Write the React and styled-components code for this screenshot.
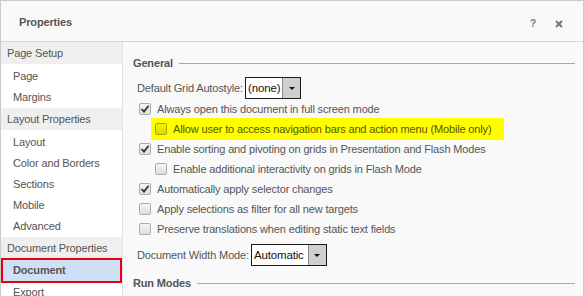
import styled, { createGlobalStyle } from "styled-components";

const GlobalStyle = createGlobalStyle`
	html, body {
		margin: 0;
		padding: 0;
		overflow: hidden;
		background: #ffffff;
	}
	body {
		font-family: "Liberation Sans", Arial, sans-serif;
		font-size: 11px;
		letter-spacing: -0.15px;
		color: #555555;
	}
`;

const Window = styled.div`
	width: 584px;
	height: 340px;
	box-sizing: border-box;
	border: 1px solid #cacaca;
	background: #f9f9f9;
	display: flex;
	flex-direction: column;
`;

const TitleBar = styled.div`
	height: 40px;
	flex: 0 0 40px;
	display: flex;
	align-items: center;
	padding: 0 16px 0 18px;
	border-bottom: 1px solid #d6d6d6;
	background: #f9f9f9;
`;

const Title = styled.div`
	flex: 1;
	font-weight: bold;
	font-size: 11px;
	color: #555;
	margin-top: 1px;
`;

const TitleButton = styled.span`
	width: 16px;
	display: flex;
	justify-content: center;
	margin-left: 10px;
	margin-top: 5px;
	font-weight: bold;
	font-size: 10px;
	color: #777;
`;

const Body = styled.div`
	flex: 1;
	display: flex;
	min-height: 0;
`;

const Sidebar = styled.div`
	width: 121px;
	flex: 0 0 121px;
	background: #ffffff;
	border-right: 1px solid #e2e2e2;
`;

const GroupHeader = styled.div`
	height: 22px;
	line-height: 22px;
	padding-left: 6px;
	background: #efefef;
	white-space: nowrap;
`;

const GroupList = styled.div`
	padding-top: ${(p) => p.$pad}px;
`;

const NavItem = styled.div`
	height: 21px;
	line-height: 21px;
	padding-left: 12px;
	white-space: nowrap;
	box-sizing: border-box;
	${(p) =>
		p.$selected &&
		`
		height: 23px;
		line-height: 23px;
		margin: -2px 1px 0;
		padding-left: 11px;
		background: #cfe0f6;
		font-weight: bold;
		outline: 2px solid #e8000b;
		outline-offset: -1px;
	`}
`;

const Content = styled.div`
	flex: 1;
	padding: 11px 8px 0 10px;
	background: #f9f9f9;
`;

const Legend = styled.div`
	height: 20px;
	display: flex;
	align-items: center;
	gap: 6px;
	font-weight: bold;
	margin-top: ${(p) => p.$top || 0}px;

	&::after {
		content: "";
		flex: 1;
		height: 1px;
		background: #a8a8a8;
		margin-top: 1px;
	}
`;

const FieldRow = styled.div`
	display: flex;
	align-items: center;
	gap: 2px;
	padding-left: 4px;
	margin-top: ${(p) => p.$top}px;
`;

const Select = styled.div`
	width: ${(p) => p.$width}px;
	height: 22px;
	box-sizing: border-box;
	border: 1px solid #1a1a1a;
	background: #fff;
	display: flex;
	color: #111;
	font-size: 11.5px;
`;

const SelectValue = styled.span`
	flex: 1;
	display: flex;
	align-items: center;
	padding-left: 2px;
`;

const SelectButton = styled.span`
	width: 17px;
	border-left: 1px solid #8a8a8a;
	background: #cfcfcf;
	display: flex;
	align-items: center;
	justify-content: center;

	&::before {
		content: "";
		border-left: 3px solid transparent;
		border-right: 3px solid transparent;
		border-top: 3px solid #111;
	}
`;

const CheckList = styled.div`
	display: flex;
	flex-direction: column;
`;

const CheckRow = styled.div`
	height: 20px;
	display: flex;
	align-items: center;
	gap: 6px;
	padding-left: ${(p) => (p.$indent ? 22 : 6)}px;
	white-space: nowrap;
	${(p) =>
		p.$highlight &&
		`
		align-self: flex-start;
		height: 22px;
		margin: -1px 0 -1px 18px;
		padding: 0 13px 0 4px;
		background: #ffff00;
		color: #555500;
	`}
`;

const Box = styled.span`
	width: 12px;
	height: 12px;
	flex: 0 0 12px;
	box-sizing: border-box;
	border: 1px solid #adadad;
	border-radius: 2px;
	background: linear-gradient(#f6f6f6, #dedede);
	display: flex;
	align-items: center;
	justify-content: center;
	${(p) =>
		p.$tinted &&
		`
		border-color: #a9a900;
		background: linear-gradient(#f3f300, #dcdc00);
	`}
`;

function Checkbox({ checked, tinted }) {
	return (
		<Box $tinted={tinted}>
			{checked && (
				<svg width="10" height="10" viewBox="0 0 10 10">
					<path
						d="M1.6 5.2 L4 7.6 L8.6 1.8"
						fill="none"
						stroke="#333"
						strokeWidth="1.8"
					/>
				</svg>
			)}
		</Box>
	);
}

const options = [
	{ label: "Always open this document in full screen mode", checked: true },
	{
		label: "Allow user to access navigation bars and action menu (Mobile only)",
		indent: true,
		highlight: true,
	},
	{ label: "Enable sorting and pivoting on grids in Presentation and Flash Modes", checked: true },
	{ label: "Enable additional interactivity on grids in Flash Mode", indent: true },
	{ label: "Automatically apply selector changes", checked: true },
	{ label: "Apply selections as filter for all new targets" },
	{ label: "Preserve translations when editing static text fields" },
];

const nav = [
	{ title: "Page Setup", items: ["Page", "Margins"] },
	{
		title: "Layout Properties",
		items: ["Layout", "Color and Borders", "Sections", "Mobile", "Advanced"],
	},
	{ title: "Document Properties", items: ["Document", "Export"] },
];

function App() {
	return (
		<>
			<GlobalStyle />
			<Window>
				<TitleBar>
					<Title>Properties</Title>
					<TitleButton>?</TitleButton>
					<TitleButton>
						<svg width="8" height="8" viewBox="0 0 8 8">
							<path d="M1 1 L7 7 M7 1 L1 7" stroke="#777" strokeWidth="2" />
						</svg>
					</TitleButton>
				</TitleBar>
				<Body>
					<Sidebar>
						{nav.map((group) => (
							<div key={group.title}>
								<GroupHeader>{group.title}</GroupHeader>
								<GroupList $pad={2}>
									{group.items.map((item) => (
										<NavItem key={item} $selected={item === "Document"}>
											{item}
										</NavItem>
									))}
								</GroupList>
							</div>
						))}
					</Sidebar>
					<Content>
						<Legend>General</Legend>
						<FieldRow $top={4}>
							Default Grid Autostyle:
							<Select $width={56}>
								<SelectValue>(none)</SelectValue>
								<SelectButton />
							</Select>
						</FieldRow>
						<CheckList>
							{options.map((o) => (
								<CheckRow key={o.label} $indent={o.indent} $highlight={o.highlight}>
									<Checkbox checked={o.checked} tinted={o.highlight} />
									{o.label}
								</CheckRow>
							))}
						</CheckList>
						<FieldRow $top={5}>
							Document Width Mode:
							<Select $width={76}>
								<SelectValue>Automatic</SelectValue>
								<SelectButton />
							</Select>
						</FieldRow>
						<Legend $top={7}>Run Modes</Legend>
					</Content>
				</Body>
			</Window>
		</>
	);
}

export default App;
